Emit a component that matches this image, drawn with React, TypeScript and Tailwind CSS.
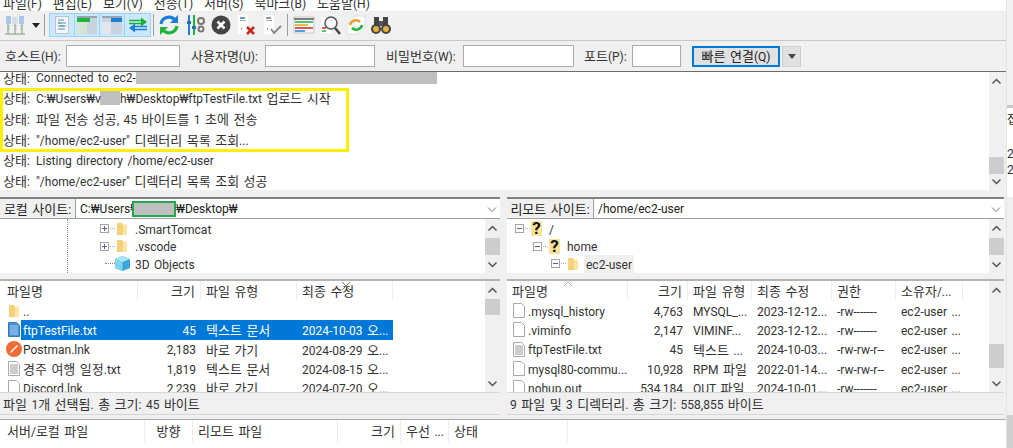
import React from 'react';

const menus = ['파일(F)', '편집(E)', '보기(V)', '전송(T)', '서버(S)', '북마크(B)', '도움말(H)'];

type Col = { label: string; width: number; right?: boolean; center?: boolean };

const localCols: Col[] = [
  { label: '파일명', width: 136 },
  { label: '크기', width: 63, right: true },
  { label: '파일 유형', width: 96 },
  { label: '최종 수정', width: 96 },
];

const remoteCols: Col[] = [
  { label: '파일명', width: 121 },
  { label: '크기', width: 60, right: true },
  { label: '파일 유형', width: 64 },
  { label: '최종 수정', width: 80 },
  { label: '권한', width: 64 },
  { label: '소유자/...', width: 67 },
];

const queueCols: Col[] = [
  { label: '서버/로컬 파일', width: 143 },
  { label: '방향', width: 48, center: true },
  { label: '리모트 파일', width: 145 },
  { label: '크기', width: 63, right: true },
  { label: '우선 ...', width: 48 },
  { label: '상태', width: 119 },
];

const localRows = [
  { icon: 'folder', cells: ['..', '', '', ''] },
  { icon: 'textblue', cells: ['ftpTestFile.txt', '45', '텍스트 문서', '2024-10-03 오...'], selected: true },
  { icon: 'postman', cells: ['Postman.lnk', '2,183', '바로 가기', '2024-08-29 오...'] },
  { icon: 'text', cells: ['경주 여행 일정.txt', '1,819', '텍스트 문서', '2024-08-15 오...'] },
  { icon: 'file', cells: ['Discord.lnk', '2,239', '바로 가기', '2024-07-20 오...'] },
];

const remoteRows = [
  { icon: 'file', cells: ['.mysql_history', '4,763', 'MYSQL_...', '2023-12-12...', '-rw-------', 'ec2-user ...'] },
  { icon: 'file', cells: ['.viminfo', '2,147', 'VIMINF...', '2023-12-12...', '-rw-------', 'ec2-user ...'] },
  { icon: 'text', cells: ['ftpTestFile.txt', '45', '텍스트 ...', '2024-10-03...', '-rw-rw-r--', 'ec2-user ...'] },
  { icon: 'file', cells: ['mysql80-commu...', '10,928', 'RPM 파일', '2022-01-14...', '-rw-rw-r--', 'ec2-user ...'] },
  { icon: 'file', cells: ['nohup.out', '534,184', 'OUT 파일', '2024-10-01...', '-rw-------', 'ec2-user ...'] },
];

// hangul runs are wider than the latin text in the original, so they get their own size
const Tx = ({ children }: { children: string }) => (
  <span className="inline-block translate-y-[1px] whitespace-pre [word-spacing:1.500px]">
    {children.split(/([가-힣]+)/).map((part, i) =>
      i % 2 === 1 ? <span key={i} className="text-[13px]">{part}</span> : part
    )}
  </span>
);

const FolderIcon = () => (
  <svg width="12" height="14" viewBox="0 0 12 14" className="shrink-0">
    <path d="M1 1h5l1 1.500V13H1z" fill="#f5d27a" />
    <path d="M7 2.500h4V13H7z" fill="#fbe6a6" />
  </svg>
);

const FileIcon = ({ kind }: { kind: string }) => {
  if (kind === 'folder') return <FolderIcon />;
  if (kind === 'postman') {
    return (
      <svg width="16" height="16" viewBox="0 0 16 16" className="shrink-0">
        <circle cx="8" cy="8" r="8" fill="#ef6c37" />
        <path d="M4 12l2-1 6-6-1-1-6 6z" fill="#fff" />
      </svg>
    );
  }
  const blue = kind === 'textblue';
  return (
    <svg width="12" height="15" viewBox="0 0 12 15" className="shrink-0">
      <path d="M.5.5h8l3 3v11H.5z" fill={blue ? '#4a90d4' : '#fff'} stroke={blue ? '#3a78b8' : '#a8a8a8'} />
      {kind !== 'file' && (
        <path d="M2 4h8M2 6h8M2 8h8M2 10h8M2 12h8" stroke={blue ? '#a9d0f2' : '#9a9a9a'} />
      )}
    </svg>
  );
};

const ExpandBox = ({ open }: { open?: boolean }) => (
  <svg width="16" height="9" viewBox="0 0 16 9" className="shrink-0">
    <rect x=".5" y=".5" width="8" height="8" fill="#fff" stroke="#a5a5a5" />
    <path d="M2 4.500h5" stroke="#4a6a9c" />
    {!open && <path d="M4.500 2v5" stroke="#4a6a9c" />}
    <path d="M10 4.500h5" stroke="#b5b5b5" strokeDasharray="1 1" />
  </svg>
);

const QuestionFolder = () => (
  <span className="flex h-[15px] w-[11px] shrink-0 items-center justify-center bg-[#fae29a] text-[17px] font-bold leading-none text-[#111]">
    ?
  </span>
);

const Scrollbar = ({ thumbTop, thumbHeight, up = true }: { thumbTop: number; thumbHeight: number; up?: boolean }) => (
  <div className="relative h-full w-[15px] shrink-0 bg-[#f0f0f0]">
    {up && (
      <svg width="15" height="15" viewBox="0 0 15 15" className="absolute left-0 top-[2px]">
        <path d="M3.500 9.500l4-4 4 4" fill="none" stroke="#555" strokeWidth="1.500" />
      </svg>
    )}
    <div className="absolute left-0 w-[15px] bg-[#cdcdcd]" style={{ top: thumbTop, height: thumbHeight }} />
    <svg width="15" height="15" viewBox="0 0 15 15" className="absolute bottom-[1px] left-0">
      <path d="M3.500 5.500l4 4 4-4" fill="none" stroke="#555" strokeWidth="1.500" />
    </svg>
  </div>
);

const ColumnHeader = ({ cols, height }: { cols: Col[]; height: number }) => (
  <div className="flex shrink-0 pb-[1px]" style={{ height }}>
    {cols.map(col => (
      <div
        key={col.label}
        style={{ width: col.width }}
        className={`flex shrink-0 items-center whitespace-nowrap border-r border-[#ededed] px-[5px] text-[#333] ${col.right ? 'justify-end' : ''} ${col.center ? 'justify-center' : ''}`}
      >
        <Tx>{col.label}</Tx>
      </div>
    ))}
  </div>
);

const SiteBar = ({ label, labelWidth, children }: { label: string; labelWidth: number; children: React.ReactNode }) => (
  <div className="flex h-[22px] shrink-0 border-b border-t-2 border-b-[#a0a0a0] border-t-[#808080] bg-white">
    <div style={{ width: labelWidth }} className="flex shrink-0 items-center justify-center whitespace-nowrap border-r border-[#a0a0a0] bg-[#f0f0f0] text-[#222]">
      <Tx>{label}</Tx>
    </div>
    <div className="flex min-w-0 flex-1 items-center whitespace-nowrap pl-[4px] text-[#222]">{children}</div>
    <svg width="14" height="14" viewBox="0 0 14 14" className="mr-[1px] self-center">
      <path d="M3 5.500l4 4 4-4" fill="none" stroke="#777" />
    </svg>
  </div>
);

const ToolIcon = ({ children, className = '' }: { children: React.ReactNode; className?: string }) => (
  <svg width="22" height="22" viewBox="0 0 22 22" className={`shrink-0 ${className}`}>{children}</svg>
);

const Toolbar = () => (
  <div className="flex h-[28px] items-center bg-[#f0f0f0] pb-[2px] pl-[4px]">
    <ToolIcon>
      <path d="M1 20h20M4 10v10M11 10v10M18 10v10" stroke="#7f9a7f" />
      <rect x="2" y="2" width="5" height="8" fill="#a9c7e8" />
      <rect x="8.500" y="3" width="5" height="7" fill="#d5dde8" />
      <rect x="15" y="2" width="5" height="8" fill="#a9c7e8" />
      <path d="M3 12h3M10 12h3M16 12h3M3 15h3M10 15h3M16 15h3" stroke="#a5bda5" />
    </ToolIcon>
    <svg width="8" height="5" viewBox="0 0 8 5" className="ml-[6px]"><path d="M0 0h8L4 5z" fill="#222" /></svg>
    <div className="ml-[4px] h-[22px] w-px bg-[#a0a0a0]" />
    <div className="ml-[4px] flex h-[24px] border border-[#99d1ff] bg-[#cce8ff]">
      <div className="flex w-[25px] items-center justify-center border-r border-[#99d1ff]">
        <svg width="14" height="18" viewBox="0 0 14 18">
          <rect x=".5" y=".5" width="13" height="17" fill="#f4f7fa" stroke="#b8c4d0" />
          <path d="M3 4h6M3 7h8M3 10h8M3 13h7" stroke="#4f8fc9" />
          <path d="M3 7h3M5 10h4" stroke="#3fae55" />
        </svg>
      </div>
      <div className="flex w-[25px] items-center justify-center border-r border-[#99d1ff]">
        <svg width="20" height="18" viewBox="0 0 20 18">
          <rect width="20" height="18" fill="#c8d3dd" />
          <rect width="20" height="2" fill="#9aa4ad" />
          <rect y="2" width="13" height="4" fill="#1fb53a" />
          <rect y="6" width="10" height="12" fill="#d3e6d3" />
        </svg>
      </div>
      <div className="flex w-[25px] items-center justify-center border-r border-[#99d1ff]">
        <svg width="20" height="18" viewBox="0 0 20 18">
          <rect width="20" height="18" fill="#c8d3dd" />
          <rect width="20" height="2" fill="#9aa4ad" />
          <rect x="9" y="2" width="11" height="4" fill="#1a7fdb" />
          <rect y="6" width="9" height="12" fill="#e2e6ea" />
        </svg>
      </div>
      <div className="flex w-[25px] items-center justify-center">
        <svg width="20" height="18" viewBox="0 0 20 18">
          <path d="M1 4.500h13M1 7.500h13" stroke="#15b02f" strokeWidth="1.500" />
          <path d="M13 1.500l6 4.500-6 4.500z" fill="#15b02f" />
          <path d="M6 10.500h13M6 13.500h13" stroke="#1a7fdb" strokeWidth="1.500" />
          <path d="M7 7.500l-6 4.500 6 4.500z" fill="#1a7fdb" />
        </svg>
      </div>
    </div>
    <div className="ml-[2px] h-[22px] w-px bg-[#a0a0a0]" />
    <ToolIcon className="ml-[4px]">
      <path d="M3 10a8 8 0 0 1 14-4" fill="none" stroke="#1a7fdb" strokeWidth="3.200" />
      <path d="M20 1v8h-8z" fill="#1a7fdb" />
      <path d="M19 12a8 8 0 0 1-14 4" fill="none" stroke="#1fb53a" strokeWidth="3.200" />
      <path d="M2 21v-8h8z" fill="#1fb53a" />
    </ToolIcon>
    <ToolIcon className="ml-[5px]">
      <path d="M4 1v20" stroke="#1a7fdb" strokeWidth="2" />
      <path d="M9 1v20" stroke="#1fb53a" strokeWidth="2" />
      <rect x="2" y="7" width="4" height="3" fill="#2b6ea8" />
      <rect x="7" y="12" width="4" height="3" fill="#2b6ea8" />
      <circle cx="16" cy="7" r="3" fill="none" stroke="#777" strokeWidth="2" />
      <circle cx="16" cy="15" r="2.500" fill="none" stroke="#777" strokeWidth="2" />
    </ToolIcon>
    <ToolIcon className="ml-[3px]">
      <circle cx="11" cy="11" r="9.500" fill="#444" />
      <path d="M7.500 7.500l7 7M14.500 7.500l-7 7" stroke="#fff" strokeWidth="2.500" />
    </ToolIcon>
    <ToolIcon className="ml-[4px]">
      <path d="M2 1h10v19H2z" fill="#fff" />
      <path d="M4 4h5" stroke="#3a78b8" strokeWidth="1.500" />
      <path d="M4 6.500h6" stroke="#9ab8d8" />
      <path d="M5 15h1" stroke="#333" />
      <path d="M11 13l7 7M18 13l-7 7" stroke="#c9281e" strokeWidth="2.500" />
    </ToolIcon>
    <ToolIcon className="ml-[4px]">
      <path d="M2 1h10v19H2z" fill="#fff" />
      <path d="M4 4h5" stroke="#777" strokeWidth="1.500" />
      <path d="M4 6.500h6" stroke="#aaa" />
      <path d="M5 15h1" stroke="#333" />
      <path d="M9 15l3 4 7-7" fill="none" stroke="#888" strokeWidth="2" />
    </ToolIcon>
    <div className="ml-[3px] h-[22px] w-px bg-[#a0a0a0]" />
    <ToolIcon className="ml-[5px]">
      <rect x="1" y="3" width="20" height="16" fill="#fafafa" stroke="#c8c8c8" />
      <path d="M1 5h20" stroke="#555" strokeWidth="1.500" />
      <path d="M2 8h18" stroke="#1fb53a" strokeWidth="1.500" />
      <path d="M2 11h13" stroke="#e8a021" strokeWidth="1.500" />
      <path d="M2 14h18" stroke="#c9281e" strokeWidth="1.500" />
      <path d="M2 17h10" stroke="#1a7fdb" strokeWidth="1.500" />
    </ToolIcon>
    <ToolIcon className="ml-[5px]">
      <rect x="1" y="3" width="10" height="16" fill="#fff" />
      <path d="M2 14h4" stroke="#c9281e" strokeWidth="1.500" />
      <path d="M2 17h4" stroke="#1fb53a" strokeWidth="1.500" />
      <circle cx="11" cy="9" r="6" fill="#f4f8fb" stroke="#555" strokeWidth="1.500" />
      <path d="M15 14l5 6" stroke="#444" strokeWidth="2.500" />
    </ToolIcon>
    <ToolIcon className="ml-[3px]">
      <rect x="2" y="9" width="11" height="11" fill="#fff" stroke="#ddd" />
      <rect x="9" y="2" width="11" height="11" fill="#fff" stroke="#ddd" />
      <path d="M5 11a6 6 0 0 1 10-3" fill="none" stroke="#e8a021" strokeWidth="2.500" />
      <path d="M17 11a6 6 0 0 1-10 3" fill="none" stroke="#1fb53a" strokeWidth="2.500" />
    </ToolIcon>
    <ToolIcon className="ml-[3px]">
      <path d="M4 3h5v8H4zM13 3h5v8h-5z" fill="#444" />
      <path d="M9 7h4v5H9z" fill="#555" />
      <circle cx="6" cy="15" r="5" fill="#444" />
      <circle cx="16" cy="15" r="5" fill="#444" />
      <circle cx="6" cy="15" r="3" fill="#e6b03c" />
      <circle cx="16" cy="15" r="3" fill="#e6b03c" />
    </ToolIcon>
  </div>
);

const QuickField = ({ label, labelWidth, width, gap }: { label: string; labelWidth: number; width: number; gap: number }) => (
  <div className="flex items-center" style={{ marginRight: gap }}>
    <span style={{ width: labelWidth }} className="whitespace-nowrap text-[#333]"><Tx>{label}</Tx></span>
    <div style={{ width }} className="h-[22px] border border-[#ababab] bg-white" />
  </div>
);

const QuickConnect = () => (
  <div className="flex h-[31px] items-center border-t border-[#c8c8c8] bg-[#f0f0f0] pl-[5px]">
    <QuickField label="호스트(H):" labelWidth={61} width={114} gap={11} />
    <QuickField label="사용자명(U):" labelWidth={74} width={110} gap={11} />
    <QuickField label="비밀번호(W):" labelWidth={77} width={111} gap={10} />
    <QuickField label="포트(P):" labelWidth={48} width={49} gap={11} />
    <div className="flex h-[21px] w-[88px] items-center justify-center whitespace-nowrap border-2 border-[#0078d7] bg-[#e1e1e1] text-[#222]">
      <Tx>빠른 연결(Q)</Tx>
    </div>
    <div className="ml-[2px] flex h-[21px] w-[19px] items-center justify-center border border-[#cfcfcf] bg-[#e1e1e1]">
      <svg width="8" height="5" viewBox="0 0 8 5"><path d="M0 0h8L4 5z" fill="#444" /></svg>
    </div>
  </div>
);

const Redacted = ({ width, height }: { width: number; height: number }) => (
  <span className="inline-block shrink-0 bg-[#bfbfbf]" style={{ width, height }} />
);

const logLines: React.ReactNode[] = [
  <><span className="w-[100px] shrink-0"><Tx>Connected to ec2-</Tx></span><Redacted width={301} height={14} /></>,
  <><span className="w-[64px] shrink-0"><Tx>C:₩Users₩v</Tx></span><Redacted width={20} height={14} /><Tx>h₩Desktop₩ftpTestFile.txt 업로드 시작</Tx></>,
  <Tx>파일 전송 성공, 45 바이트를 1 초에 전송</Tx>,
  <Tx>"/home/ec2-user" 디렉터리 목록 조회...</Tx>,
  <Tx>Listing directory /home/ec2-user</Tx>,
  <Tx>"/home/ec2-user" 디렉터리 목록 조회 성공</Tx>,
];

const MessageLog = () => (
  <div className="relative flex h-[119px] overflow-hidden border-t border-[#6d6d6d] bg-white pr-[2px]">
    <div className="min-w-0 flex-1 -translate-y-[5px]">
      {logLines.map((line, i) => (
        <div key={i} className="flex h-[20.700px] items-center whitespace-pre pl-[3px] text-[#333]">
          <span className="w-[33px] shrink-0"><Tx>상태:</Tx></span>
          {line}
        </div>
      ))}
    </div>
    <div className="absolute left-0 top-[16px] h-[64px] w-[349px] border-[3px] border-[#fff000]" />
    <Scrollbar thumbTop={85} thumbHeight={17} />
    <div className="absolute bottom-0 right-0 top-0 w-[2px] bg-[#f0f0f0]" />
  </div>
);

const ListPane = ({ cols, thumbTop, thumbHeight, children, footer, inset }: { cols: Col[]; thumbTop: number; thumbHeight: number; children: React.ReactNode; footer: string; inset: string }) => (
  <>
    <div className="flex h-[113px] shrink-0 overflow-hidden border-t-2 border-[#b4b4b4] bg-white">
      <div className={`relative min-w-0 flex-1 ${inset}`}>
        <ColumnHeader cols={cols} height={20} />
        {children}
      </div>
      <Scrollbar thumbTop={thumbTop} thumbHeight={thumbHeight} />
    </div>
    <div className="flex h-[23px] shrink-0 items-center whitespace-nowrap border-y border-[#d6d6d6] bg-[#f0f0f0] pl-[3px] text-[#333]">
      <Tx>{footer}</Tx>
    </div>
  </>
);

const FileRow = ({ row, cols }: { row: { icon: string; cells: string[]; selected?: boolean }; cols: Col[] }) => (
  <div className="flex h-[19.300px] items-center text-[#333]">
    {row.cells.map((cell, i) => (
      <div
        key={i}
        style={{ width: cols[i].width }}
        className={`flex h-full shrink-0 items-center whitespace-nowrap ${cols[i].right ? 'justify-end pr-[5px]' : 'pl-[5px]'} ${row.selected && i > 0 ? 'bg-[#0078d7] text-white' : ''}`}
      >
        {i === 0 ? (
          <>
            <span className="flex w-[14px] shrink-0 justify-center"><FileIcon kind={row.icon} /></span>
            <span className={`flex h-full flex-1 items-center pl-[2px] ${row.selected ? 'bg-[#0078d7] text-white' : ''}`}><Tx>{cell}</Tx></span>
          </>
        ) : <Tx>{cell}</Tx>}
      </div>
    ))}
  </div>
);

const TreeRow = ({ indent, children }: { indent: number; children: React.ReactNode }) => (
  <div style={{ paddingLeft: indent }} className="flex h-[17.500px] items-center text-[#333]">
    {children}
  </div>
);

const App: React.FC = () => {
  return (
    <div className="flex h-[448px] w-[1013px] overflow-hidden bg-white text-[12px] font-['Roboto','Noto_Sans_CJK_KR',sans-serif]">
      <div className="h-full w-[1006px] shrink-0">
        <div className="flex h-[11px] items-end gap-[11px] overflow-hidden bg-white pl-[3px] leading-[16px] text-[#333]">
          {menus.map(m => <span key={m} className="shrink-0"><Tx>{m}</Tx></span>)}
        </div>
        <div className="h-[1px] bg-[#ededed]" />
        <Toolbar />
        <QuickConnect />
        <MessageLog />

        <div className="flex h-[229px] gap-[7px] bg-[#f0f0f0] pr-[2px] pt-[7px]">
          <div className="flex min-w-0 flex-1 flex-col">
            <SiteBar label="로컬 사이트:" labelWidth={76}>
              <span className="w-[52px] shrink-0">C:₩Users₩</span>
              <span className="h-[16px] w-[44px] shrink-0 border-2 border-[#1fa84f] bg-[#bfbfbf]" />
              ₩Desktop₩
            </SiteBar>
            <div className="flex h-[54px] shrink-0 bg-white">
              <div className="relative min-w-0 flex-1 overflow-hidden pt-[1px]">
                <TreeRow indent={100}><ExpandBox /><FolderIcon /><span className="ml-[7px]"><Tx>.SmartTomcat</Tx></span></TreeRow>
                <TreeRow indent={100}><ExpandBox /><FolderIcon /><span className="ml-[7px]"><Tx>.vscode</Tx></span></TreeRow>
                <TreeRow indent={105}>
                  <span className="w-[10px] border-t border-dotted border-[#888]" />
                  <svg width="15" height="15" viewBox="0 0 15 15" className="shrink-0">
                    <path d="M7.500 0L15 3v9l-7.500 3L0 12V3z" fill="#3aa7d8" />
                    <path d="M7.500 0L15 3 7.500 6 0 3z" fill="#a9e6f2" />
                    <path d="M0 3l7.500 3v9L0 12z" fill="#7fd6ea" />
                  </svg>
                  <span className="ml-[5px]"><Tx>3D Objects</Tx></span>
                </TreeRow>
                <div className="absolute left-[67px] top-0 h-full border-l border-dotted border-[#888]" />
              </div>
              <Scrollbar thumbTop={19} thumbHeight={17} />
            </div>
            <div className="h-[6px] shrink-0" />
            <ListPane cols={localCols} thumbTop={18} thumbHeight={16} footer="파일 1개 선택됨. 총 크기: 45 바이트" inset="pl-[2px]">
              {localRows.map((row, i) => <FileRow key={i} row={row} cols={localCols} />)}
              <svg width="10" height="10" viewBox="0 0 10 10" className="absolute left-[341px] top-[0px]">
                <path d="M1 1l8 8M9 1L1 9" stroke="#777" />
              </svg>
            </ListPane>
          </div>

          <div className="flex w-[497px] shrink-0 flex-col">
            <SiteBar label="리모트 사이트:" labelWidth={87}>/home/ec2-user</SiteBar>
            <div className="flex h-[54px] shrink-0 bg-white">
              <div className="relative min-w-0 flex-1 overflow-hidden pl-[8px] pt-[1px]">
                <TreeRow indent={0}><ExpandBox open /><QuestionFolder /><span className="ml-[7px]"><Tx>/</Tx></span></TreeRow>
                <TreeRow indent={18}><ExpandBox open /><QuestionFolder /><span className="ml-[7px]"><Tx>home</Tx></span></TreeRow>
                <TreeRow indent={36}>
                  <ExpandBox open /><FolderIcon />
                  <span className="ml-[5px] bg-[#f0f0f0] px-[2px]"><Tx>ec2-user</Tx></span>
                </TreeRow>
              </div>
              <Scrollbar thumbTop={19} thumbHeight={17} />
            </div>
            <div className="h-[6px] shrink-0" />
            <ListPane cols={remoteCols} thumbTop={63} thumbHeight={24} footer="9 파일 및 3 디렉터리. 총 크기: 558,855 바이트" inset="">
              {remoteRows.map((row, i) => <FileRow key={i} row={row} cols={remoteCols} />)}
              <svg width="12" height="6" viewBox="0 0 12 6" className="absolute left-[55px] top-0">
                <path d="M2 5l4-4 4 4" fill="none" stroke="#aaa" />
              </svg>
            </ListPane>
          </div>
        </div>

        <div className="h-[1px] bg-[#a8a8a8]" />
        <div className="pl-[2px]">
          <ColumnHeader cols={queueCols} height={23} />
        </div>
      </div>

      <div className="flex h-full min-w-0 flex-1 flex-col border-l border-[#e4e4e4] text-[#333]">
        <div className="h-[105px] shrink-0 bg-[#f3f3f3]" />
        <div className="h-[3px] shrink-0 bg-[#c8c8c8]" />
        <div className="h-[89px] shrink-0 overflow-hidden bg-white pt-[4px] leading-[16px]">
          <div>접</div>
          <div className="mt-[18px]">2</div>
          <div>2</div>
        </div>
        <div className="h-[218px] shrink-0 bg-[#f0f0f0]" />
        <div className="min-h-0 flex-1 bg-[#cfcfcf]" />
      </div>
    </div>
  );
};

export default App;
